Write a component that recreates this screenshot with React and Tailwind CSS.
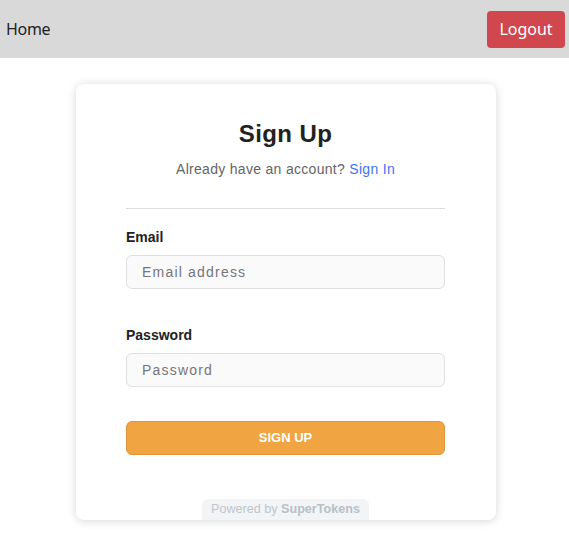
export default function App() {
  return (
    <div className="min-h-[548px] bg-white">
      <header className="flex h-[58px] items-center justify-between bg-[#d9d9d9] pl-[6px] pr-[4px] font-['Noto_Sans',sans-serif]">
        <span className="text-[16px] tracking-[-0.3px] text-[#222]">Home</span>
        <button className="h-[37px] w-[78px] rounded-[4px] bg-[#d0484d] text-[16px] text-white">Logout</button>
      </header>
      <div className="flex justify-center pl-[3px] pt-[26px] font-['Liberation_Sans',Arial,sans-serif]">
        <div className="flex w-[420px] flex-col items-center rounded-[8px] bg-white pl-[50px] pr-[51px] pt-[30px] shadow-[0_1px_10px_rgba(0,0,0,0.16)]">
          <h1 className="text-[24px] font-bold leading-[40px] tracking-[0.4px] text-[#222]">Sign Up</h1>
          <p className="mt-[5px] text-[14px] leading-[21px] tracking-[0.3px] text-[#656565]">
            Already have an account? <span className="text-[#3f73f6]">Sign In</span>
          </p>
          <div className="mt-[28px] h-px w-full bg-[#dddddd]" />
          <label className="mt-[16px] w-full text-[14px] font-bold leading-[24px] text-[#222]">Email</label>
          <div className="mt-[6px] flex h-[34px] w-full items-center rounded-[6px] border border-[#e0e0e0] bg-[#fafafa] pl-[15px] text-[14px] tracking-[1.2px] text-[#75757c]">
            Email address
          </div>
          <label className="mt-[34px] w-full text-[14px] font-bold leading-[24px] text-[#222]">Password</label>
          <div className="mt-[6px] flex h-[34px] w-full items-center rounded-[6px] border border-[#e0e0e0] bg-[#fafafa] pl-[15px] text-[14px] tracking-[1.2px] text-[#75757c]">
            Password
          </div>
          <button className="mt-[34px] h-[34px] w-full rounded-[6px] border border-[#e0943c] bg-[#f0a442] text-[13px] font-bold text-white">
            SIGN UP
          </button>
          <div className="mt-[44px] flex h-[21px] items-center rounded-t-[6px] bg-[#f2f4f6] px-[9px] text-[12.6px] text-[#c0c6cc]">
            Powered by&nbsp;<span className="font-bold text-[#b8c0c8]">SuperTokens</span>
          </div>
        </div>
      </div>
    </div>
  );
}
